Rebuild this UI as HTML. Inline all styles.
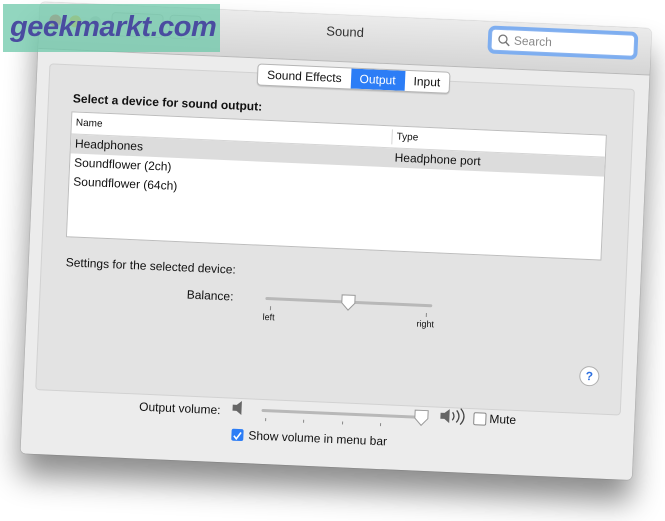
<!DOCTYPE html>
<html><head><meta charset="utf-8"><style>
html,body{margin:0;padding:0;background:#fff;width:665px;height:521px;overflow:hidden;font-family:"Liberation Sans",sans-serif;color:#111}
#win{position:absolute;left:30px;top:15px;width:612px;height:452px;transform:rotate(2.5deg);background:#ececec;border-radius:5px;box-shadow:0 22px 30px rgba(0,0,0,.45),0 0 1px #888;overflow:hidden}
#tb{position:absolute;left:0;top:0;width:612px;height:46px;background:linear-gradient(#ebebeb,#d5d5d5);border-bottom:1px solid #b9b9b9}
.abs{position:absolute}
#title{left:0;width:612px;text-align:center;top:9px;font-size:13px;color:#333}
#search{left:452px;top:7px;width:142px;height:20px;background:#fff;border:1px solid #8ab4f0;box-shadow:0 0 0 3px #7eaef0;border-radius:4px;font-size:12px;color:#888}
#panel{left:12px;top:61px;width:584px;height:325px;background:#e3e3e3;border:1px solid #d2d2d2;border-radius:4px}
#tabs{left:220px;top:52px;height:20px;display:flex;border:1px solid #b5b5b5;border-radius:4px;background:#fff;font-size:12px;overflow:hidden;box-shadow:0 1px 1px rgba(0,0,0,.15)}
#tabs div{padding:2px 9px;line-height:16px}
#tabs .sel{background:#2c7df6;color:#fff}
#table{left:36px;top:108px;width:534px;height:124px;background:#fff;border:1px solid #bdbdbd;font-size:12px}
.row{position:absolute;left:0;width:534px;height:19px;line-height:19px}
</style></head><body>
<div id="win">
 <div id="tb">
  <div class="abs" style="left:10px;top:12px;width:12px;height:12px;border-radius:6px;background:#fc605c"></div>
  <div class="abs" style="left:30px;top:12px;width:12px;height:12px;border-radius:6px;background:#fdbc40"></div>
  <div class="abs" style="left:50px;top:12px;width:12px;height:12px;border-radius:6px;background:#ccc"></div>
  <div class="abs" style="left:72px;top:7px;width:50px;height:22px;border-radius:4px;background:#e0e0e0;border:1px solid #c3c3c3"></div>
  <div class="abs" style="left:130px;top:7px;width:30px;height:22px;border-radius:4px;background:#e0e0e0;border:1px solid #c3c3c3"></div>
  <div class="abs" id="title">Sound</div>
  <div class="abs" id="search"><svg width="14" height="14" style="position:absolute;left:5px;top:3px"><circle cx="6" cy="6" r="4" fill="none" stroke="#777" stroke-width="1.3"/><line x1="9" y1="9" x2="12.5" y2="12.5" stroke="#777" stroke-width="1.5"/></svg><span style="position:absolute;left:22px;top:3px">Search</span></div>
 </div>
 <div class="abs" id="panel"></div>
 <div class="abs" id="tabs"><div>Sound Effects</div><div class="sel">Output</div><div>Input</div></div>
 <div class="abs" style="left:37px;top:88px;font-size:12px;font-weight:bold">Select a device for sound output:</div>
 <div class="abs" id="table">
  <div class="row" style="top:0;height:21px;border-bottom:1px solid #d5d5d5;font-size:10px;line-height:21px"><span style="padding-left:4px">Name</span><span style="position:absolute;left:320px;border-left:1px solid #d5d5d5;padding-left:4px;top:3px;line-height:15px">Type</span></div>
  <div class="row" style="top:22px;background:#dcdcdc"><span style="padding-left:4px">Headphones</span><span style="position:absolute;left:324px">Headphone port</span></div>
  <div class="row" style="top:41px"><span style="padding-left:4px">Soundflower (2ch)</span></div>
  <div class="row" style="top:60px"><span style="padding-left:4px">Soundflower (64ch)</span></div>
 </div>
 <div class="abs" style="left:37px;top:252px;font-size:12px">Settings for the selected device:</div>
 <div class="abs" style="left:150px;top:279px;width:56px;text-align:right;font-size:12px">Balance:</div>
 <div class="abs" style="left:238px;top:285px;width:167px;height:3px;background:#b8b8b8;border-radius:2px"></div>
 <svg class="abs" style="left:313px;top:278px" width="16" height="18"><path d="M1.5 1.5h13v8l-6.5 7l-6.5-7z" fill="#fff" stroke="#9a9a9a"/></svg>
 <div class="abs" style="left:243px;top:294px;width:1px;height:4px;background:#888"></div>
 <div class="abs" style="left:399px;top:294px;width:1px;height:4px;background:#888"></div>
 <div class="abs" style="left:236px;top:300px;font-size:9px">left</div>
 <div class="abs" style="left:390px;top:300px;font-size:9px">right</div>
 <div class="abs" style="left:555px;top:340px;width:18px;height:18px;border-radius:10px;background:#fff;border:1px solid #b0b0b0;text-align:center;color:#2c6fe0;font-weight:bold;font-size:12px;line-height:18px">?</div>
 <div class="abs" style="left:110px;top:393px;width:88px;text-align:right;font-size:12px">Output volume:</div>
 <svg class="abs" style="left:209px;top:389px" width="14" height="16"><path d="M1 5h4l5-4v14l-5-4H1z" fill="#666"/></svg>
 <div class="abs" style="left:239px;top:397px;width:162px;height:3px;background:#b8b8b8;border-radius:2px"></div>
 <svg class="abs" style="left:391px;top:390px" width="16" height="18"><path d="M1.5 1.5h13v8l-6.5 7l-6.5-7z" fill="#fff" stroke="#9a9a9a"/></svg>
 <div class="abs" style="left:243px;top:406px;width:1px;height:3px;background:#888"></div>
 <div class="abs" style="left:281px;top:406px;width:1px;height:3px;background:#888"></div>
 <div class="abs" style="left:320px;top:406px;width:1px;height:3px;background:#888"></div>
 <div class="abs" style="left:358px;top:406px;width:1px;height:3px;background:#888"></div>
 <svg class="abs" style="left:417px;top:386px" width="30" height="20"><path d="M1 7h4l5-4v14l-5-4H1z" fill="#666"/><path d="M13 6q3 4 0 8M17 4q5 6 0 12M21 2q7 8 0 16" fill="none" stroke="#444" stroke-width="1.3"/></svg>
 <div class="abs" style="left:451px;top:391px;width:11px;height:11px;border:1px solid #888;border-radius:2px;background:#fff"></div>
 <div class="abs" style="left:467px;top:390px;font-size:12px">Mute</div>
 <div class="abs" style="left:210px;top:418px;width:12px;height:12px;border-radius:2px;background:#2c7df6"><svg width="12" height="12"><path d="M2.5 6l2.5 3l4.5-6.5" fill="none" stroke="#fff" stroke-width="1.6"/></svg></div>
 <div class="abs" style="left:227px;top:417px;font-size:12px">Show volume in menu bar</div>
</div>
<div class="abs" style="left:3px;top:4px;width:217px;height:48px;background:rgba(110,200,170,.75)"></div>
<div class="abs" style="left:10px;top:11px;font-size:29px;font-weight:bold;font-style:italic;color:#4a4ca0;letter-spacing:-0.5px">geekmarkt.com</div>
</body></html>
